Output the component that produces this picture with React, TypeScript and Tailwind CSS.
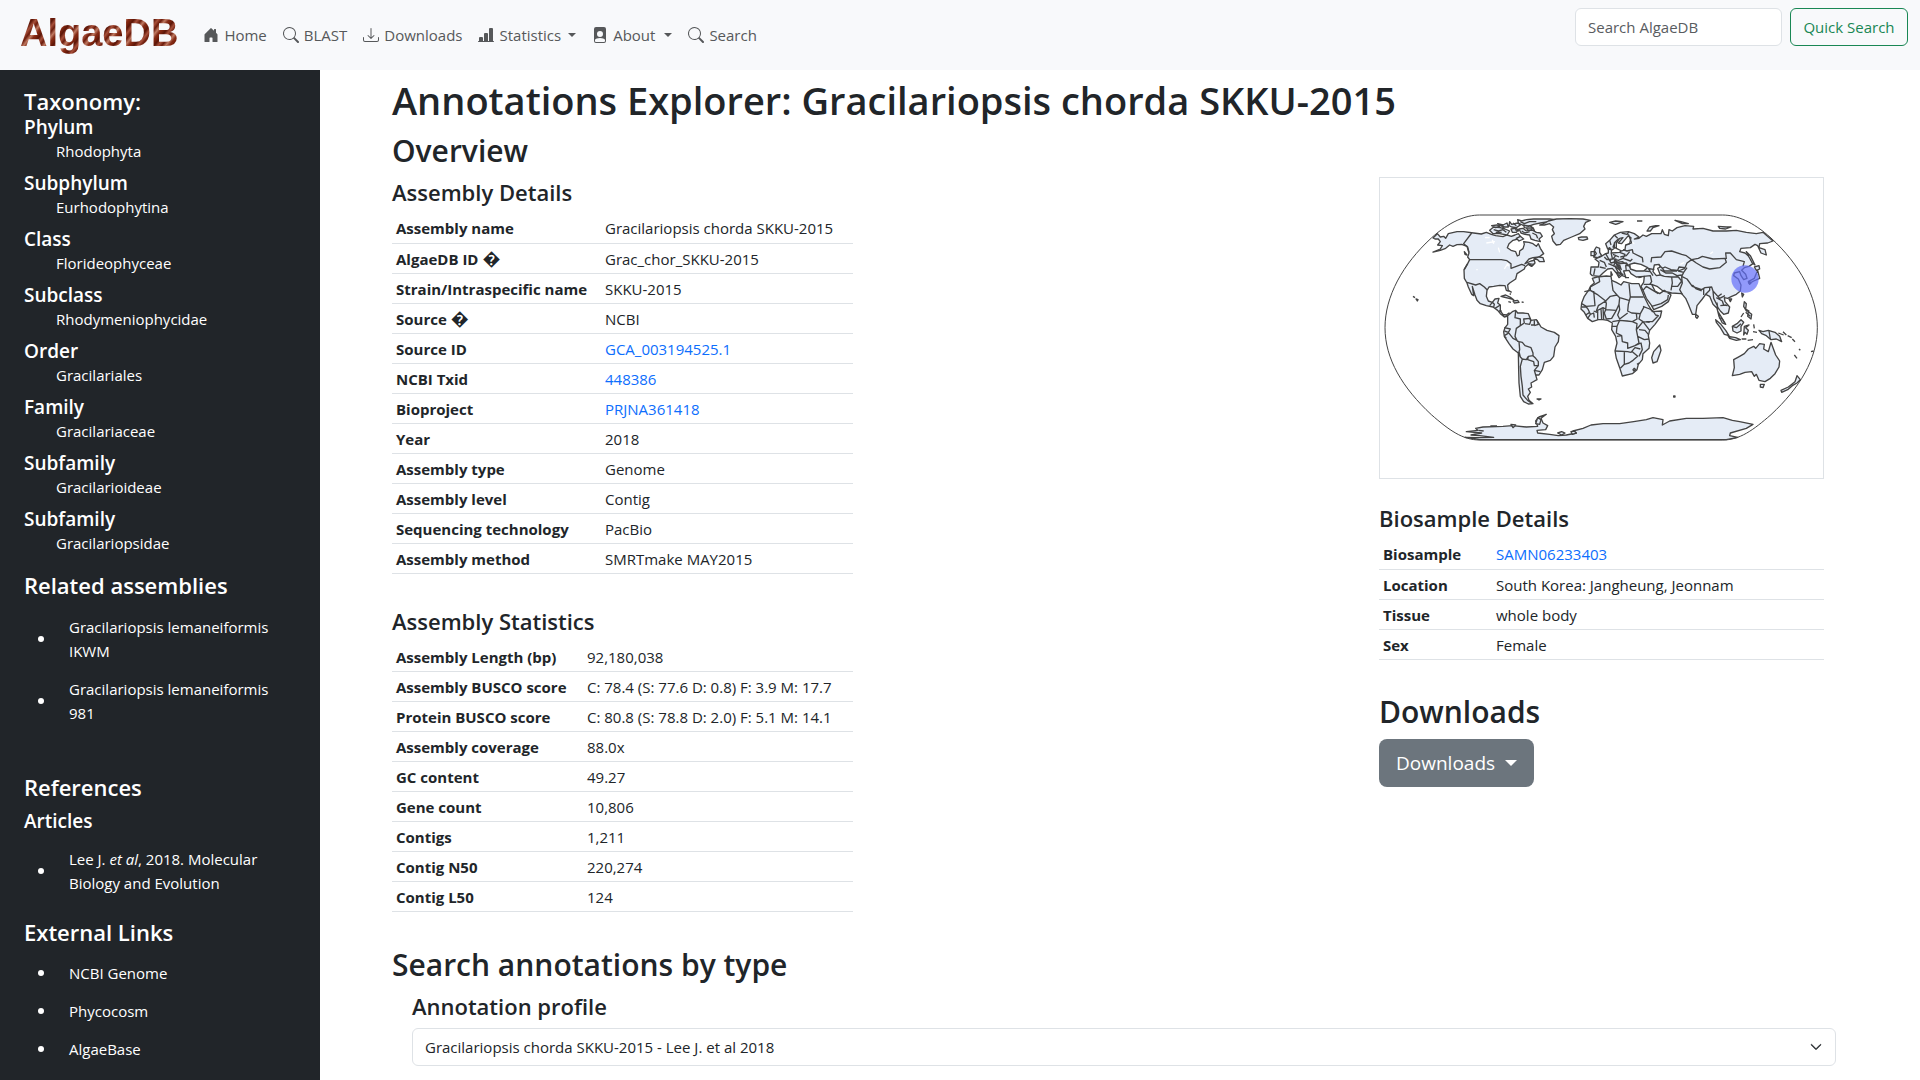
import { useState, type ReactNode } from 'react';
import {
  BsHouseDoorFill,
  BsSearch,
  BsDownload,
  BsBarChartLineFill,
  BsFilePersonFill,
  BsChevronDown,
} from 'react-icons/bs';

interface Row {
  label: string;
  value: string;
  href?: string;
  hint?: boolean;
}

const taxonomy = [
  { rank: 'Phylum', name: 'Rhodophyta' },
  { rank: 'Subphylum', name: 'Eurhodophytina' },
  { rank: 'Class', name: 'Florideophyceae' },
  { rank: 'Subclass', name: 'Rhodymeniophycidae' },
  { rank: 'Order', name: 'Gracilariales' },
  { rank: 'Family', name: 'Gracilariaceae' },
  { rank: 'Subfamily', name: 'Gracilarioideae' },
  { rank: 'Subfamily', name: 'Gracilariopsidae' },
];

const assemblyDetails: Row[] = [
  { label: 'Assembly name', value: 'Gracilariopsis chorda SKKU-2015' },
  { label: 'AlgaeDB ID', value: 'Grac_chor_SKKU-2015', hint: true },
  { label: 'Strain/Intraspecific name', value: 'SKKU-2015' },
  { label: 'Source', value: 'NCBI', hint: true },
  { label: 'Source ID', value: 'GCA_003194525.1', href: '#source' },
  { label: 'NCBI Txid', value: '448386', href: '#txid' },
  { label: 'Bioproject', value: 'PRJNA361418', href: '#bioproject' },
  { label: 'Year', value: '2018' },
  { label: 'Assembly type', value: 'Genome' },
  { label: 'Assembly level', value: 'Contig' },
  { label: 'Sequencing technology', value: 'PacBio' },
  { label: 'Assembly method', value: 'SMRTmake MAY2015' },
];

const assemblyStats: Row[] = [
  { label: 'Assembly Length (bp)', value: '92,180,038' },
  { label: 'Assembly BUSCO score', value: 'C: 78.4 (S: 77.6 D: 0.8) F: 3.9 M: 17.7' },
  { label: 'Protein BUSCO score', value: 'C: 80.8 (S: 78.8 D: 2.0) F: 5.1 M: 14.1' },
  { label: 'Assembly coverage', value: '88.0x' },
  { label: 'GC content', value: '49.27' },
  { label: 'Gene count', value: '10,806' },
  { label: 'Contigs', value: '1,211' },
  { label: 'Contig N50', value: '220,274' },
  { label: 'Contig L50', value: '124' },
];

const biosample: Row[] = [
  { label: 'Biosample', value: 'SAMN06233403', href: '#biosample' },
  { label: 'Location', value: 'South Korea: Jangheung, Jeonnam' },
  { label: 'Tissue', value: 'whole body' },
  { label: 'Sex', value: 'Female' },
];

function Caret() {
  return <span className="h-0 w-0 border-x-4 border-t-4 border-x-transparent border-t-current" />;
}

function DetailTable({ rows, labelWidth }: { rows: Row[]; labelWidth: string }) {
  return (
    <table className="w-full table-fixed border-collapse leading-[21px]">
      <colgroup>
        <col className={labelWidth} />
        <col />
      </colgroup>
      <tbody>
        {rows.map((row) => (
          <tr key={row.label} className="h-[30px] border-b border-[#dee2e6] whitespace-nowrap">
            <th scope="row" className="px-1 pt-0.5 text-left font-bold">
              {row.label}
              {row.hint && <span className="ml-1 text-[18px] leading-none">{'\uFFFD'}</span>}
            </th>
            <td className="px-1 pt-0.5">
              {row.href ? <a href={row.href} className="text-[#0d6efd]">{row.value}</a> : row.value}
            </td>
          </tr>
        ))}
      </tbody>
    </table>
  );
}

function SideItem({ children }: { children: ReactNode }) {
  return (
    <li className="flex items-center py-[7px]">
      <span className="ml-3.5 mr-[25px] h-1.5 w-1.5 shrink-0 rounded-full bg-white" />
      <a href="#link">{children}</a>
    </li>
  );
}

function WorldMap() {
  return (
    <svg viewBox="31 25 1329 900" className="block w-full" role="img" aria-label="Sample location">
      <path
        fill="none"
        stroke="#444"
        strokeWidth="3"
        d="M330 136H1059C1100 136 1150 156 1204 205C1290 284 1343 380 1343 474C1343 568 1290 655 1204 735C1150 782 1110 811 1059 811H330C279 811 239 782 185 735C99 655 46 568 46 474C46 380 99 284 185 205C239 156 289 136 330 136Z"
      />
      <g fill="#e5ecf6" stroke="#444" strokeWidth="4" strokeLinejoin="round">
        {/* North and Central America */}
        <path d="M190 205L203 192L212 202L222 200L228 206L236 192L262 186L282 186L312 190L335 193L350 188L365 194L378 198L400 201L412 196L425 200L436 196L446 192L452 200L444 208L430 212L418 222L413 234L424 242L438 246L443 259L449 256L450 244L460 237L464 224L462 216L478 218L490 222L500 230L506 222L512 236L522 252L508 262L490 264L478 268L466 282L484 274L494 272L496 280L486 290L476 284L466 292L464 298L448 308L442 312L438 328L420 340L414 346L416 364L410 362L406 348L390 347L372 350L358 352L352 362L350 380L356 394L368 398L376 388L388 386L384 400L392 406L392 424L400 434L410 436L418 430L420 438L404 442L392 432L384 422L370 412L350 408L332 402L322 392L316 376L308 350L312 378L306 374L296 352L292 340L284 326L283 300L294 282L300 270L294 262L298 250L292 230L276 224L262 225L250 230L240 226L228 236L212 242L190 247L212 238L218 228L204 226L212 216L206 208L196 208Z" />
        <path fill="none" d="M300 270H395L412 273L424 282L424 296L440 290L456 284L466 288M306 190L282 222L294 232L298 248M292 338L318 346L330 342L344 352L352 360M360 408L368 398L374 404L372 412M376 416L392 406M388 424L396 424M402 434V442M284 300L294 282" />
        <path fill="none" stroke="#fff" d="M346 204H360M350 220L376 216M368 210L372 222M386 234L390 248M404 298L414 282L418 290M320 300H324" />
        {/* Arctic Canada */}
        <path d="M360 182L372 172L392 174L406 178L420 184L412 196L390 192L370 192ZM366 168L382 166L390 170L378 174ZM384 162L400 166L412 160L416 172L400 172ZM420 156L426 164L444 160L452 166L440 174L426 172L418 168ZM424 178L436 176L446 180L440 188L428 188ZM444 150L456 154L470 150L492 148L540 148L558 150L536 156L512 160L492 164L476 170L458 166L446 160ZM448 178L460 176L470 184L486 180L500 188L512 190L518 200L508 208L512 216L496 212L484 208L480 196L466 194L454 190ZM440 206L452 200L462 208L448 214ZM470 176L490 174L494 182L476 182ZM462 166L484 170L490 176L464 174Z" />
        <path d="M372 180L386 184L400 180L410 188M378 188H396M430 160L440 168M436 180L448 184M452 156L464 162L480 156L500 156M456 184L466 190L480 186M488 190L500 196L504 206M396 166L404 172" />
        <path d="M492 268L508 262L520 264L524 276L510 276L504 270ZM476 282L492 284L486 290ZM284 246L292 256L286 254Z" />
        {/* Greenland and Iceland */}
        <path d="M510 166L526 160L536 154L560 148L600 147L640 148L662 152L648 158L642 170L646 178L630 192L606 202L582 212L572 224L560 226L550 214L546 200L554 192L548 180L552 172L540 162L524 166ZM626 204L636 202L652 202L654 208L640 212L628 210Z" />
        {/* Caribbean, Pacific and Atlantic islands */}
        <path d="M394 380L408 376L424 384L432 390L418 386L402 382ZM430 394L444 392L448 398L434 400ZM416 396L424 398M456 397L462 398M416 362L426 368M420 372L424 374M130 380L136 384M139 388L145 390L143 394ZM502 688H514L508 691Z" />
        {/* South America */}
        <path d="M414 438L428 426L438 422L444 430L460 430L476 432L484 452L500 450L508 462L514 472L532 482L554 488L568 498L566 516L556 532L552 560L542 572L524 578L518 600L508 616L498 616L502 630L484 640L486 652L476 658L482 668L474 680L478 692L490 702L476 703L462 696L452 680L448 640L447 600L446 550L430 538L418 522L404 500L402 486L406 474L414 464Z" />
        <path fill="none" d="M438 424L436 444L452 448L452 468L440 476L436 500L442 512L430 506L416 488L404 484M452 468L464 460L462 448L480 446L484 454M484 452L480 464L466 462M494 452V466L484 466M502 452L506 464L494 468M404 498L414 492L422 478L404 474M442 514L448 516L450 540L446 552M448 516L458 518L466 528L484 534L490 550L490 558L476 560L470 570L458 568L452 562L448 546M476 560L474 570L492 576L494 588L506 588L506 576L498 566L490 558M506 588L494 602L498 616M494 602L512 606M458 568L452 590L454 620L458 650L460 676L474 692L488 702M446 552L452 562M404 500L410 506" />
        {/* Antarctica */}
        <path d="M286 803L330 804L372 803L330 798L304 796L336 790L290 786L324 782L318 776L340 772L400 770L428 768L470 772L504 770L498 754L508 742L530 734L514 746L520 760L534 768L528 780L502 782L504 790L540 794L566 798L590 796L620 790L610 784L640 776L664 766L700 762L750 762L792 756L830 750L850 744L880 750L878 766L900 754L950 746L1000 746L1060 744L1088 752L1110 756L1150 764L1130 776L1082 790L1080 798L1104 803L1070 810H330Z" />
        <path d="M504 744L514 750L510 764L498 762ZM564 790L576 786L586 790L576 796ZM604 786L614 784L620 790L608 794ZM424 764L438 766L430 774ZM362 769H382M326 782L342 784" />

        <g transform="translate(690 0)">
          {/* Africa */}
          <path d="M-22 326L-8 322L20 319L34 320L36 332L50 338L64 346L72 336L96 342L118 342L122 352L134 382L146 406L158 426L186 424L182 442L166 464L150 482L146 498L150 520L148 536L130 552L128 570L116 584L112 600L98 612L68 619L60 594L50 566L46 544L52 520L48 500L36 480L38 460L24 452L10 450L-4 450L-22 456L-36 446L-46 428L-56 418L-54 400L-46 380L-32 360L-26 348L-16 340Z" />
          <path fill="none" d="M-2 322L0 336L-28 352L-28 362L-46 366M-28 362L-8 374L18 394L32 380L52 376L40 362L36 334M-18 364L-14 408L-40 410L-54 402M-28 362L-16 368M52 376L60 384L58 404L50 422L18 420L20 402L18 394M18 394L-4 408L-10 424L10 414L18 418M88 342L92 382H132M92 382L86 404L84 424L96 430L122 432L134 410M60 384L88 392M50 422L36 446L20 448L14 430L18 420M58 404L60 420L54 436L60 448L84 430M38 456L60 452L82 454L98 456L112 448L110 432M52 470L60 452M36 470H52L50 490L66 498L68 516L84 520V536L106 528M98 456L112 462L110 480L114 500L118 520L106 528M112 478L130 456L150 458M122 432L118 448L130 456L150 482M130 410L150 418L160 424L168 436L176 438L158 456H140M118 480L136 482L146 494M114 500L134 510L148 508M46 544L84 546L94 548L106 534L122 538M74 548V584L62 596M74 584L88 580L100 572L114 560L98 546M106 528L124 520L128 540L118 560M100 600L104 596L108 600L102 604ZM52 500L66 498M112 584L118 580M-54 412H-40L-34 420L-28 434L-18 430L-16 444M-42 436L-30 428M-6 422V450M4 418L6 448M10 414L12 450M-36 446L-28 434M-4 430L-18 424" />
          <path d="M180 526L184 542L172 576L160 580L156 564L162 546ZM222 679H226V682H222Z" />
          {/* Eurasia */}
          <path d="M24 238L18 222L30 212L44 196L62 188L86 186L104 192L118 202L104 208L118 206L130 196L140 200L156 192L184 192L188 180L194 194L206 198L208 180L218 184L232 174L256 168L282 170L280 178L310 176L340 184L380 184L410 182L440 188L470 192L490 188L520 214L504 220L480 222L478 234L496 240L500 256L484 250L474 228L466 224L452 234L424 236L420 246L436 250L450 262L460 282L448 290L434 294L426 302L438 314L442 326L432 330L424 318L420 306L404 310L402 318L416 328L424 346L422 364L410 374L396 380L384 386L374 384L376 396L390 412L386 430L372 434L362 424L354 412L352 400L354 424L366 444L378 464L368 460L358 440L352 416L340 404L330 380L318 374L308 388L292 408L288 434L278 434L266 404L258 386L246 372L216 370L190 364L172 350L156 344L166 364L180 372L194 362L214 376L206 396L186 410L162 420L156 408L140 386L130 362L124 350L132 338L134 320L110 322L94 312L88 302L72 304L78 322L68 318L60 300L46 290L56 308L70 314L58 324L50 310L38 296L24 298L10 310L0 320L-22 318L-28 312L-26 292L-4 292L-2 278L-14 268L2 262L18 252L26 250L26 240L34 238L36 250L60 248L70 236L66 226L52 236L40 232L46 218L56 208L44 220L44 236L36 242L30 234Z" />
          <path fill="#fff" d="M78 226L90 222L94 204L86 198L74 212L66 222L56 220L70 204L60 206L50 220L50 236L66 244L76 240ZM92 298L90 284L104 280L124 284L144 294L132 304L110 304ZM164 286L178 284L182 292L174 296L182 316L170 318L160 306Z" />
          <path fill="none" d="M30 212L34 226M44 196L54 206M66 190L82 194L88 186M86 194L96 220L80 226M70 240L82 244L98 240L100 250L128 264L130 278M60 248L76 254L70 266L92 274L98 268M0 272L14 278L20 292M14 262L22 270L40 268L48 258M18 252L34 280L50 276L62 282L80 280L92 294M26 282L46 290L60 286L64 298M34 248L38 266L56 272L70 266M42 280L46 270M54 276L56 290L66 300M-18 316L-14 296M0 292L18 296M62 262L80 258L90 246M40 290L48 278L68 276L84 286M48 266L50 282L60 302M80 304L78 288L92 286M40 254L58 262M24 266L34 274" />
          <path fill="none" d="M154 278L156 264L184 262L196 246L216 244L246 254L260 258L276 270L262 280L256 294L238 292L234 302L214 300L196 292L188 296L178 286M276 270L296 266L308 260L340 268L376 266L380 278L360 294L330 298L310 292L290 280L276 270M380 268L378 250L392 250L410 270L434 276L430 290M262 294L252 308L236 304L256 296M252 308L246 320L262 328L278 350L306 360L316 354L336 352L340 364L360 386L376 378M182 300L198 310L218 310L232 318L246 316M188 296L194 304L232 304M182 316L194 320L216 322L218 340L216 350L214 362M216 322L236 322L246 334L234 350L216 350M246 322L248 340L240 360L248 374M278 346L290 358L306 364M312 356V376M318 374L330 362L330 352M340 364L342 386L352 406M350 384L368 394L372 406L384 408M132 320L152 318L156 336L150 344M132 344L156 344M134 304L152 306L160 318M152 306L146 296L164 300M130 362L140 350L176 372M156 410L184 402L204 390L206 376M362 408L380 406M356 380L366 372" />
          <path fill="none" stroke="#fff" d="M332 252L340 246M242 284L254 278M98 218L104 222" />
          {/* British Isles, Arctic islands */}
          <path d="M-10 232L0 236V248L6 258L-6 264L-18 262L-10 252L-16 242ZM-26 246L-16 246L-16 258L-26 258ZM142 184L150 172L168 168L178 168L160 174L152 184ZM30 158L48 154L70 156L60 160L48 164ZM112 154H128M226 152L244 156L266 162L248 162ZM356 170L380 172L394 172L378 178L360 176ZM50 308L64 312L58 318ZM34 306L38 316L34 318ZM76 324H88M116 324L126 322" />
          {/* East and South-East Asia */}
          <path d="M440 246L452 258L466 286L458 280L448 262ZM464 292L478 288L480 298L470 302ZM474 302L480 326L462 334L448 342L446 336L464 326ZM448 334L454 340L450 344ZM426 370L432 374L428 382ZM388 388L396 388L392 396ZM434 396L440 402L438 418L448 424L440 424L432 410ZM446 426L456 434L454 448L444 440ZM432 430L424 442M438 428L452 440M348 450L362 462L378 482L388 498L374 494L362 474L350 458ZM386 500L408 504L422 510L410 512L390 506ZM398 470L412 462L424 450L432 458L424 470L424 484L412 490L400 484ZM434 470L448 466L438 474L446 482L442 494L436 488L432 496ZM426 508H440M444 512L460 510M462 464L464 476M460 486L472 488M478 482L490 486L506 482L526 488L540 500L546 516L530 508L514 510L500 498L486 492ZM536 490L552 496M550 486L560 496M564 498L576 504M578 508L586 516M288 434L296 440L292 446L288 442Z" />
          <path fill="none" d="M508 484L512 508M398 470L410 474L424 462M376 462L368 448L358 444" />
          {/* Oceania */}
          <path d="M402 570L420 560L434 552L446 538L462 530L468 536L480 522L494 524L492 538L506 546L514 518L520 534L528 556L540 574L538 592L526 612L512 626L496 636L478 632L470 614L464 620L456 606L436 608L420 614L398 618L404 594ZM482 644L494 644L490 654L482 652ZM592 618L602 630L592 640L578 648L564 660L546 668L544 662L566 652L586 636ZM634 546L642 544M598 538L602 542M584 556L592 566" />
        </g>
      </g>
      <circle cx="1126" cy="328" r="41" fill="#636efa" fillOpacity="0.7" />
    </svg>
  );
}

export default function App() {
  const [query, setQuery] = useState('');

  return (
    <div className="flex min-h-screen flex-col bg-white font-['Open_Sans',sans-serif] text-[15px] leading-6 text-[#212529]">
      <header className="flex h-[70px] items-start justify-between bg-[#f8f9fb] pl-5 pr-3">
        <div className="flex h-[70px] items-center">
          <a
            href="#home"
            className="mb-1 bg-[repeating-linear-gradient(128deg,#8a2a12_0px,#5c1608_4px,#a8503a_7px,#6b1c0c_10px,#c07a62_13px,#7c2410_16px)] bg-clip-text font-['Liberation_Sans',sans-serif] text-[38px] leading-[60px] font-bold text-transparent"
          >
            AlgaeDB
          </a>
          <nav className="ml-[25px] flex items-center gap-4 text-[#56585a]">
            <a href="#home" className="flex items-center gap-[5px]"><BsHouseDoorFill className="h-4 w-4" />Home</a>
            <a href="#blast" className="flex items-center gap-[5px]"><BsSearch className="h-4 w-4" />BLAST</a>
            <a href="#downloads" className="flex items-center gap-[5px]"><BsDownload className="h-4 w-4" />Downloads</a>
            <button type="button" className="flex items-center gap-[5px]">
              <BsBarChartLineFill className="h-4 w-4" />Statistics<span className="ml-0.5 flex"><Caret /></span>
            </button>
            <button type="button" className="flex items-center gap-[5px]">
              <BsFilePersonFill className="h-4 w-4" />About<span className="ml-1 flex"><Caret /></span>
            </button>
            <a href="#search" className="flex items-center gap-[5px]"><BsSearch className="h-4 w-4" />Search</a>
          </nav>
        </div>
        <form className="flex gap-2 pt-2" onSubmit={(e) => e.preventDefault()}>
          <input
            type="search"
            aria-label="Search AlgaeDB"
            placeholder="Search AlgaeDB"
            value={query}
            onChange={(e) => setQuery(e.target.value)}
            className="h-[38px] w-[207px] rounded-md border border-[#dee2e6] bg-white px-3 placeholder:text-[#595c5f]"
          />
          <button type="submit" className="h-[38px] w-[118px] rounded-md border border-[#198754] whitespace-nowrap text-[#198754]">
            Quick Search
          </button>
        </form>
      </header>

      <div className="flex flex-1">
        <aside className="w-1/6 shrink-0 bg-[#212529] px-6 pt-[17px] text-white">
          <h4 className="text-[22px] leading-7 font-semibold">Taxonomy:</h4>
          {taxonomy.map((t) => (
            <div key={t.name} className="mb-2">
              <h5 className="text-[19px] leading-6 font-semibold">{t.rank}</h5>
              <p className="pl-8">{t.name}</p>
            </div>
          ))}

          <h4 className="mt-4 mb-[9px] text-[22px] leading-7 font-semibold">Related assemblies</h4>
          <ul>
            <SideItem>Gracilariopsis lemaneiformis IKWM</SideItem>
            <SideItem>Gracilariopsis lemaneiformis 981</SideItem>
          </ul>

          <h4 className="mt-[41px] mb-2 text-[22px] leading-7 font-semibold">References</h4>
          <h5 className="mb-[7px] text-[19px] leading-6 font-semibold">Articles</h5>
          <ul>
            <SideItem>Lee J. <i>et al</i>, 2018. Molecular<br />Biology and Evolution</SideItem>
          </ul>

          <h4 className="mt-4 mb-2 text-[22px] leading-7 font-semibold">External Links</h4>
          <ul>
            <SideItem>NCBI Genome</SideItem>
            <SideItem>Phycocosm</SideItem>
            <SideItem>AlgaeBase</SideItem>
          </ul>
        </aside>

        <main className="flex-1 pt-1.5 pr-[84px] pl-[72px]">
          <h1 className="mb-2 text-[38px] leading-[48px] font-semibold">
            Annotations Explorer: Gracilariopsis chorda SKKU-2015
          </h1>
          <h2 className="text-[30px] leading-[38px] font-semibold">Overview</h2>

          <div className="flex justify-between pr-3">
            <div className="w-[461px] pt-2">
              <h4 className="mb-[7px] text-[22px] leading-7 font-semibold">Assembly Details</h4>
              <DetailTable rows={assemblyDetails} labelWidth="w-[209px]" />
              <h4 className="mt-[33px] mb-[7px] text-[22px] leading-7 font-semibold">Assembly Statistics</h4>
              <DetailTable rows={assemblyStats} labelWidth="w-[191px]" />
            </div>

            <div className="w-[445px] pt-[7px]">
              <div className="border border-[#dee2e6]">
                <WorldMap />
              </div>
              <h4 className="mt-[25px] mb-[7px] text-[22px] leading-7 font-semibold">Biosample Details</h4>
              <DetailTable rows={biosample} labelWidth="w-[113px]" />
              <h2 className="mt-[33px] mb-2 text-[30px] leading-[38px] font-semibold">Downloads</h2>
              <button type="button" className="flex h-12 items-center gap-2.5 rounded-lg bg-[#6c757d] px-[17px] text-[19px] text-white">
                Downloads
                <span className="h-0 w-0 border-x-6 border-t-6 border-x-transparent border-t-white" />
              </button>
            </div>
          </div>

          <h2 className="mt-[34px] text-[30px] leading-[38px] font-semibold">Search annotations by type</h2>
          <div className="pl-5">
            <label htmlFor="profile" className="mt-2 mb-2 block text-[22px] leading-7 font-semibold">Annotation profile</label>
            <div className="grid">
              <select
                id="profile"
                className="col-start-1 row-start-1 h-[38px] w-full appearance-none rounded-md border border-[#dee2e6] bg-white px-3"
              >
                <option>Gracilariopsis chorda SKKU-2015 - Lee J. et al 2018</option>
              </select>
              <BsChevronDown className="pointer-events-none col-start-1 row-start-1 mr-3.5 h-3 w-3 self-center justify-self-end stroke-1" />
            </div>
          </div>
        </main>
      </div>
    </div>
  );
}
